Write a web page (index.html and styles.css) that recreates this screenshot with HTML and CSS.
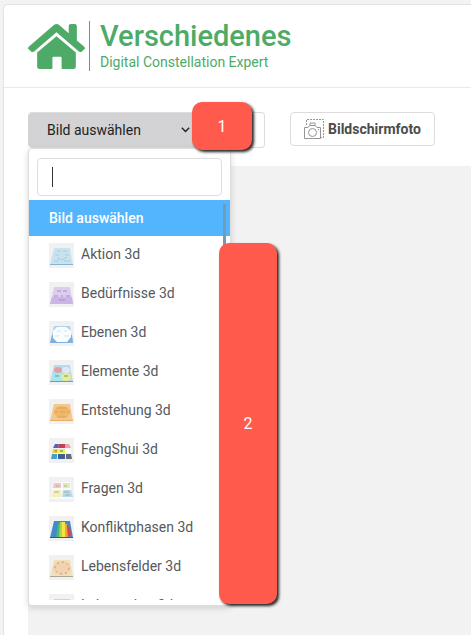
FILE: index.html
```
<!DOCTYPE html>
<html lang="de">
<head>
  <meta charset="UTF-8" />
  <meta name="viewport" content="width=device-width, initial-scale=1.0"/>
  <title>Verschiedenes - Digital Constellation Expert</title>
  <link rel="stylesheet" href="styles.css">
</head>
<body>
  <div class="page">
    <header class="header">
      <svg class="logo" viewBox="0 0 56 44" aria-hidden="true">
        <path d="M28 0Q30 0 32 2L40 9V2Q40 0 42 0H46Q48 0 48 2V16L55 22Q57 24 55 25L53 27Q52 28 50 27L28 8L6 27Q4 28 3 27L1 25Q-1 24 1 22L24 2Q26 0 28 0Z"/>
        <path d="M28 12L47 28V42Q47 44 45 44H34Q33 44 33 43V33Q33 32 32 32H25Q24 32 24 33V43Q24 44 23 44H11Q9 44 9 42V28Z"/>
      </svg>
      <div class="brand">
        <h1>Verschiedenes</h1>
        <p>Digital Constellation Expert</p>
      </div>
    </header>

    <div class="toolbar">
      <div class="picker">
        <div class="picker-group">
          <button class="picker-toggle" type="button" aria-expanded="true">
            Bild auswählen
            <svg width="9" height="6" viewBox="0 0 9 6" aria-hidden="true"><path d="M.8 .8L4.500 4.500L8.200 .8"/></svg>
          </button>
        </div>
        <span class="callout callout-one">1</span>

        <div class="dropdown">
          <div class="search">
            <input type="text" aria-label="Bild suchen" autofocus>
            <span class="caret"></span>
          </div>
          <ul class="options">
            <li><button class="option selected" type="button">Bild auswählen</button></li>
            <li><button class="option" type="button">
              <svg viewBox="0 0 25 25"><path fill="#c8e2ef" d="M5 5H21L24 22H1Z"/><path fill="#86b5d5" d="M1 21H24V22H1Z"/><path stroke="#a9cbd8" fill="none" d="M8 8H12M14 8H18M6 12H10M16 12H20M8 15L13 17L18 14M5 18H10M15 18H21"/></svg>
              Aktion 3d</button></li>
            <li><button class="option" type="button">
              <svg viewBox="0 0 25 25"><path fill="#dccdf0" d="M5 5H21L24 22H1Z"/><path fill="#cdb4e6" d="M3 15H23L24 22H1Z"/><path stroke="#a48fb9" fill="none" d="M8 9H12M14 9H18M5 14H9M12 14H14M17 14H21M10 18H16"/></svg>
              Bedürfnisse 3d</button></li>
            <li><button class="option" type="button">
              <svg viewBox="0 0 25 25"><path fill="#aed2f0" d="M5 5H21L24 22H1Z"/><path fill="#7fb0e0" d="M3 14H23L24 22H1Z"/><path fill="#fafdfd" d="M8 6L17 6L22 10V16L18 21H8L4 17V10Z"/><path stroke="#d5e3e5" d="M8 10H12M15 10H18M6 15H10M15 15H20"/></svg>
              Ebenen 3d</button></li>
            <li><button class="option" type="button">
              <svg viewBox="0 0 25 25"><path fill="#b8dcec" d="M5 5H21L24 22H1Z"/><path fill="#5f9cdf" d="M1 21H24V22H1Z"/><ellipse cx="9" cy="10" rx="4" ry="3" fill="#e0a0a8"/><ellipse cx="17" cy="10" rx="4" ry="3" fill="#dceaf3"/><ellipse cx="8" cy="17" rx="5" ry="4" fill="#9ee8ef"/><ellipse cx="17" cy="17" rx="5" ry="4" fill="#e9ec8c"/><path stroke="#6b9b87" d="M6 16H10M15 16H19"/></svg>
              Elemente 3d</button></li>
            <li><button class="option" type="button">
              <svg viewBox="0 0 25 25"><path fill="#f4c78e" d="M5 5H21L24 22H1Z"/><path fill="#e5ad6c" d="M1 21H24V22H1Z"/><ellipse cx="13" cy="13" rx="8" ry="6" fill="#efb766"/><path stroke="#dba35c" fill="none" d="M8 9H18M5 13H9M11 13H16M18 13H21M8 18H18"/></svg>
              Entstehung 3d</button></li>
            <li><button class="option" type="button">
              <svg viewBox="0 0 25 25"><path fill="#5861b5" d="M6 6H10L9 10H4Z"/><path fill="#c14152" d="M10 6H16V10H9Z"/><path fill="#e7a3b2" d="M16 6H20L22 10H16Z"/><path fill="#e9d445" d="M4 11H9L8 15H3Z"/><path fill="#f1f04e" d="M9 11H16V15H8Z"/><path fill="#fff" d="M16 11H22V15H16Z"/><path fill="#4a9ed0" d="M3 16H8V21H2Z"/><path fill="#3c6099" d="M9 16H16V21H9Z"/><path fill="#626c78" d="M17 16H22L23 21H17Z"/><path stroke="#6b6b5f" d="M6 13H8M11 13H14"/></svg>
              FengShui 3d</button></li>
            <li><button class="option" type="button">
              <svg viewBox="0 0 25 25"><path fill="#fafafa" d="M5 5H21L24 22H1Z"/><path fill="#efc7c5" d="M5 6H12V11H4Z"/><path fill="#e2edb1" d="M14 6H21V11H14Z"/><path fill="#f4f1bd" d="M4 13H12V20H2Z"/><path fill="#bbd9ef" d="M14 13H22L24 20H13Z"/><path stroke="#a9b29e" d="M7 9H10M15 9H18M5 15H10M15 15H20M16 18H21"/></svg>
              Fragen 3d</button></li>
            <li><button class="option" type="button">
              <svg viewBox="0 0 25 25"><path fill="#4389cd" d="M5 5H21L24 22H1Z"/><path fill="#45b96c" d="M9 8L12 6V21H7Z"/><path fill="#a9d84b" d="M11 6H14V21H10Z"/><path fill="#f2e64c" d="M13 6H16L17 21H13Z"/><path fill="#f2a33d" d="M16 8H18L19 21H16Z"/><path fill="#db4549" d="M18 9L21 12L22 19L19 21Z"/><path fill="#35598c" d="M1 21H24V22H1Z"/></svg>
              Konfliktphasen 3d</button></li>
            <li><button class="option" type="button">
              <svg viewBox="0 0 25 25"><path fill="#f0e2b8" d="M5 5H21L24 22H1Z"/><path fill="#aaa693" d="M1 21H24V22H1Z"/><ellipse cx="13" cy="13" rx="9" ry="7" fill="#f3d2b2"/><ellipse cx="13" cy="13" rx="7" ry="6" fill="none" stroke="#ba9a79" stroke-dasharray="2 3"/></svg>
              Lebensfelder 3d</button></li>
            <li><button class="option" type="button">
              <svg viewBox="0 0 25 25"><path fill="#decfc6" d="M5 5H21L24 22H1Z"/></svg>
              Lebensalter 3d</button></li>
          </ul>
          <span class="scrollbar"></span>
          <span class="callout callout-two">2</span>
        </div>
      </div>

      <button class="screenshot" type="button">
        <svg width="20" height="20" viewBox="0 0 20 20" aria-hidden="true">
          <path d="M2.500 6V.5H19.500V18.500H17" stroke-dasharray="2 1"/>
          <path d="M.5 8.500H4L5.500 6.500H11.500L13 8.500H16.500V19.500H.5Z"/>
          <path d="M6 6V4H11V6"/>
          <circle cx="8.500" cy="13.500" r="4"/>
          <path d="M14 10.500H15"/>
        </svg>
        Bildschirmfoto
      </button>
    </div>

    <main class="canvas"></main>
  </div>
</body>
</html>
```
FILE: styles.css
```
* {
  box-sizing: border-box;
}
body {
  margin: 0;
  padding: 4px 0 0 3px;
  font-family: Roboto, sans-serif;
  font-size: 14px;
  color: #55595c;
  background: #f3f3f3;
  overflow: hidden;
}
button, input {
  font: inherit;
}
.page {
  display: flex;
  flex-direction: column;
  min-height: calc(100vh - 4px);
  background: white;
  border: 1px solid #e2e2e2;
  border-width: 1px 0 0 1px;
  border-radius: 5px 0 0 0;
}
.header {
  display: flex;
  align-items: center;
  gap: 4px;
  height: 83px;
  padding: 0 24px;
  border-bottom: 1px solid #e9e9e9;
}
.logo {
  width: 57px;
  height: 45px;
  fill: #4dab67;
}
.brand {
  height: 50px;
  padding-left: 10px;
  border-left: 1px solid #4dab67;
  color: #4dab67;
}
.brand h1 {
  margin: 0;
  font-size: 29px;
  font-weight: 500;
  line-height: 30px;
}
.brand p {
  margin: 0;
  line-height: 22px;
}
.toolbar {
  display: flex;
  align-items: flex-start;
  gap: 25px;
  height: 78px;
  padding: 24px 24px 0;
}
.picker {
  position: relative;
  width: 237px;
}
.picker-group {
  height: 36px;
  border: 1px solid #dcdcdc;
  border-left: 0;
  border-radius: 4px;
}
.picker-toggle {
  display: flex;
  align-items: center;
  gap: 40px;
  width: 203px;
  height: 34px;
  padding: 0 19px;
  border: 0;
  border-radius: 4px;
  background: #d3d3d5;
  color: #222;
}
.picker-toggle svg {
  fill: none;
  stroke: #222;
  stroke-width: 1.4;
}
.screenshot {
  display: flex;
  align-items: center;
  gap: 4px;
  height: 34px;
  padding: 0 13px;
  border: 1px solid #dcdcdc;
  border-radius: 4px;
  background: white;
  color: #4c4c4c;
  font-weight: 700;
}
.screenshot svg {
  fill: none;
  stroke: #959595;
}
.dropdown {
  position: absolute;
  top: 36px;
  left: 0;
  width: 203px;
  padding-bottom: 5px;
  border: 1px solid #dedede;
  border-radius: 4px;
  background: white;
  box-shadow: 0 2px 6px rgba(0,0,0,0.15);
}
.search {
  position: relative;
  padding: 9px 8px 4px;
}
.search input {
  display: block;
  width: 100%;
  height: 38px;
  padding: 0 14px;
  border: 1px solid #dddee0;
  border-radius: 4px;
  outline: none;
  caret-color: transparent;
}
.caret {
  position: absolute;
  top: 18px;
  left: 23px;
  width: 1px;
  height: 20px;
  background: #333;
}
.options {
  height: 400px;
  margin: 0;
  padding: 0;
  list-style: none;
  overflow: hidden;
}
.option {
  display: flex;
  align-items: flex-start;
  gap: 7px;
  width: 100%;
  height: 39px;
  padding: 7px 20px;
  border: 0;
  background: white;
  color: #55595c;
  line-height: 22px;
}
.option svg {
  width: 25px;
  height: 25px;
  background: #f1f1f1;
}
.option.selected {
  height: 36px;
  background: #54b5ff;
  color: white;
  font-weight: 500;
}
.scrollbar {
  position: absolute;
  top: 55px;
  right: 4px;
  width: 3px;
  height: 100px;
  background: #6d9dbd;
}
.callout {
  position: absolute;
  display: flex;
  align-items: center;
  justify-content: center;
  border-radius: 10px;
  background: #ff5a4c;
  color: white;
  font-size: 16px;
  box-shadow: 2px 2px 3px #222;
}
.callout-one {
  top: -10px;
  left: 164px;
  width: 60px;
  height: 48px;
  z-index: 2;
}
.callout-two {
  top: 94px;
  left: 190px;
  width: 58px;
  height: 361px;
}
.canvas {
  flex: 1;
  margin-left: 24px;
  background: #f2f2f2;
}
```
